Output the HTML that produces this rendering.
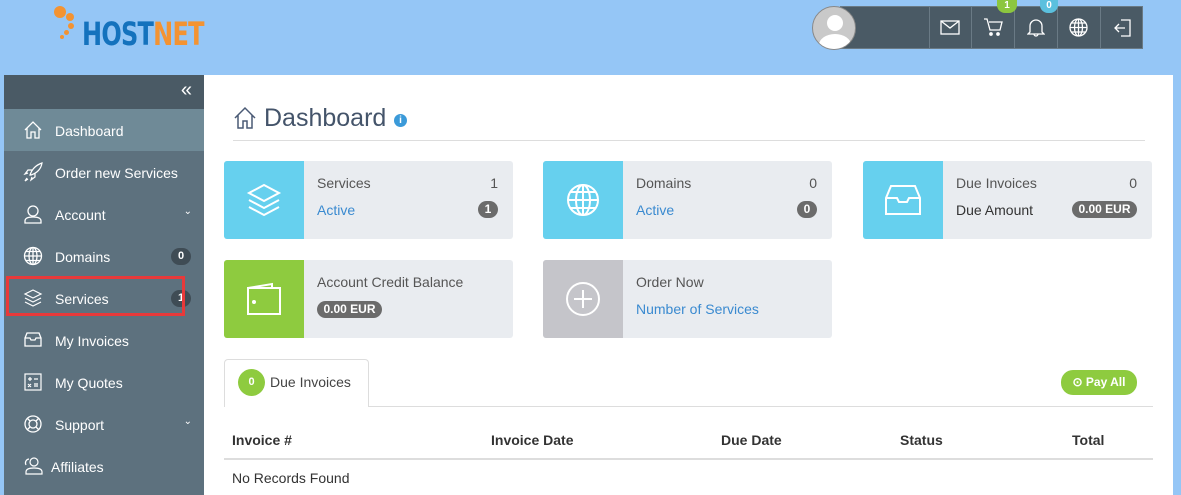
<!DOCTYPE html>
<html><head><style>
*{margin:0;padding:0;box-sizing:border-box}
body{width:1181px;height:495px;overflow:hidden;background:#95c6f6;font-family:"Liberation Sans",sans-serif;position:relative}
.abs{position:absolute}
.side{left:4px;top:75px;width:200px;height:420px;background:#5d717e}
.sidetop{left:0;top:0;width:200px;height:34px;background:#4a5a65;color:#fff;font-size:20px;text-align:right;padding-right:12px;line-height:30px}
.item{position:absolute;left:0;width:200px;height:42px;color:#fff;font-size:14px;line-height:44px;padding-left:51px}
.item svg{position:absolute;left:19px;top:11px}
.main{left:204px;top:75px;width:969px;height:420px;background:#fff}
.card{position:absolute;width:289px;height:78px;background:#e9ecf0;border-radius:3px;overflow:hidden}
.ic{position:absolute;left:0;top:0;width:80px;height:78px;display:flex;align-items:center;justify-content:center}
.t1{position:absolute;left:93px;top:14px;font-size:14px;color:#555}
.t2{position:absolute;left:93px;top:41px;font-size:14px;color:#3a8ad0}
.n1{position:absolute;right:15px;top:14px;font-size:14px;color:#555}
.pill{position:absolute;background:#6b6b6b;color:#fff;font-size:11px;font-weight:bold;border-radius:9px;height:17px;line-height:17px;text-align:center}
.th{position:absolute;top:432px;font-size:14px;font-weight:bold;color:#333}
</style></head><body>
<!-- logo -->
<div class="abs" style="left:54px;top:6px;width:12px;height:12px;border-radius:50%;background:#f39332"></div>
<div class="abs" style="left:66px;top:13px;width:8px;height:8px;border-radius:50%;background:#f39332"></div>
<div class="abs" style="left:68px;top:23px;width:6px;height:6px;border-radius:50%;background:#f39332"></div>
<div class="abs" style="left:64px;top:30px;width:5px;height:5px;border-radius:50%;background:#f39332"></div>
<div class="abs" style="left:60px;top:35px;width:4px;height:4px;border-radius:50%;background:#f39332"></div>
<div class="abs" style="left:82px;top:17px;font-size:32px;font-weight:bold;letter-spacing:-1px;line-height:34px;font-family:'DejaVu Sans',sans-serif;transform:scaleX(0.75);transform-origin:0 0;white-space:nowrap"><span style="color:#1472bd">HOST</span><span style="color:#f39332">NET</span></div>
<!-- top bar -->
<div class="abs" style="left:840px;top:6px;width:303px;height:43px;background:#4a5a65;border:1px solid #6a7a85"></div>
<div class="abs" style="left:812px;top:6px;width:44px;height:44px;border-radius:50%;background:#c9c9c9;border:1px solid #888;overflow:hidden">
<div style="position:absolute;left:14px;top:8px;width:16px;height:16px;border-radius:50%;background:#fff"></div>
<div style="position:absolute;left:6px;top:27px;width:32px;height:22px;border-radius:50%;background:#fff"></div></div>
<div class="abs" style="left:929px;top:6px;width:1px;height:43px;background:#6a7a85"></div>
<div class="abs" style="left:971px;top:6px;width:1px;height:43px;background:#6a7a85"></div>
<div class="abs" style="left:1014px;top:6px;width:1px;height:43px;background:#6a7a85"></div>
<div class="abs" style="left:1057px;top:6px;width:1px;height:43px;background:#6a7a85"></div>
<div class="abs" style="left:1100px;top:6px;width:1px;height:43px;background:#6a7a85"></div>
<svg class="abs" style="left:940px;top:20px" width="20" height="15" fill="none" stroke="#fff" stroke-width="1.3"><rect x="1" y="1" width="18" height="13"/><path d="M1 1l9 7 9-7"/></svg>
<svg class="abs" style="left:983px;top:18px" width="20" height="18" fill="none" stroke="#fff" stroke-width="1.3"><path d="M1 1h3l3 11h10l2-8H6"/><circle cx="8" cy="16" r="1.2" fill="#fff"/><circle cx="15" cy="16" r="1.2" fill="#fff"/></svg>
<svg class="abs" style="left:1027px;top:18px" width="18" height="19" fill="none" stroke="#fff" stroke-width="1.3"><path d="M3 14V8a6 6 0 0112 0v6l2 2H1z M7 16a2 2 0 004 0"/></svg>
<svg class="abs" style="left:1069px;top:18px" width="19" height="19" fill="none" stroke="#fff" stroke-width="1.3"><circle cx="9.5" cy="9.5" r="8.5"/><ellipse cx="9.5" cy="9.5" rx="4" ry="8.5"/><path d="M1 9.5h17M9.5 1v17M2.5 5h14M2.5 14h14"/></svg>
<svg class="abs" style="left:1112px;top:18px" width="20" height="20" fill="none" stroke="#fff" stroke-width="1.3"><path d="M9 2h9v16H9M3 10h10M7 6l-4 4 4 4"/></svg>
<div class="abs" style="left:997px;top:0;width:20px;height:13px;border-radius:0 0 8px 8px;background:#8cc63f;color:#fff;font-size:10px;font-weight:bold;text-align:center;line-height:11px">1</div>
<div class="abs" style="left:1040px;top:0;width:18px;height:13px;border-radius:0 0 8px 8px;background:#5bc0de;color:#fff;font-size:10px;font-weight:bold;text-align:center;line-height:11px">0</div>
<!-- sidebar -->
<div class="abs side">
<div class="abs sidetop">«</div>
<div class="item" style="top:34px;background:#6f8a97;height:42px">
<svg width="20" height="20" fill="none" stroke="#fff" stroke-width="1.3"><path d="M2 10L10 2l8 8M4 8v10h4v-6h4v6h4V8"/></svg>Dashboard</div>
<div class="item" style="top:76px"><svg width="20" height="20" fill="none" stroke="#fff" stroke-width="1.2"><path d="M7 13c2-6 6-10 12-12-1 6-5 10-11 12zM5 11l-3 1 3-4h4M9 15l-1 3 4-3v-4M4 16l-2 3 3-2"/></svg>Order new Services</div>
<div class="item" style="top:118px"><svg width="20" height="20" fill="none" stroke="#fff" stroke-width="1.3"><circle cx="10" cy="7" r="5"/><path d="M2 19v-2c0-3 4-4 8-4s8 1 8 4v2z"/></svg>Account<span style="position:absolute;right:12px;top:-3px;font-size:10px">⌄</span></div>
<div class="item" style="top:160px"><svg width="20" height="20" fill="none" stroke="#fff" stroke-width="1.3"><circle cx="10" cy="10" r="8.5"/><ellipse cx="10" cy="10" rx="4" ry="8.5"/><path d="M1.5 10h17M10 1.5v17M3 5.5h14M3 14.5h14"/></svg>Domains<span class="pill" style="left:167px;top:13px;width:20px;background:#3f4c55">0</span></div>
<div class="item" style="top:202px"><svg width="20" height="20" fill="none" stroke="#fff" stroke-width="1.2"><path d="M10 2l8 4-8 4-8-4zM2 10l8 4 8-4M2 14l8 4 8-4"/></svg>Services<span class="pill" style="left:167px;top:13px;width:20px;background:#3f4c55">1</span></div>
<div class="item" style="top:244px"><svg width="20" height="20" fill="none" stroke="#fff" stroke-width="1.3"><path d="M2 8l2-5h12l2 5v8H2zM2 8h5l1 2h4l1-2h5"/></svg>My Invoices</div>
<div class="item" style="top:286px"><svg width="20" height="20" fill="none" stroke="#fff" stroke-width="1.2"><rect x="2" y="2" width="16" height="16"/><path d="M5 7h4M7 5v4M11 7h4M5 12l3 3M8 12l-3 3M11 12h4M11 14h4"/></svg>My Quotes</div>
<div class="item" style="top:328px"><svg width="20" height="20" fill="none" stroke="#fff" stroke-width="1.3"><circle cx="10" cy="10" r="8"/><circle cx="10" cy="10" r="4"/><path d="M4 4l3 3M16 4l-3 3M4 16l3-3M16 16l-3-3"/></svg>Support<span style="position:absolute;right:12px;top:-3px;font-size:10px">⌄</span></div>
<div class="item" style="top:370px;padding-left:47px"><svg width="22" height="20" fill="none" stroke="#fff" stroke-width="1.2"><circle cx="11" cy="6" r="4"/><path d="M3 18v-2c0-3 4-4 8-4s8 1 8 4v2zM6 3a4 4 0 00-3 6"/></svg>Affiliates</div>
</div>
<div class="abs" style="left:6px;top:276px;width:179px;height:40px;border:3px solid #e8393a"></div>
<!-- main -->
<div class="abs main"></div>
<svg class="abs" style="left:233px;top:106px" width="24" height="24" fill="none" stroke="#4a5a75" stroke-width="1.5"><path d="M2 12L12 2l10 10M5 9v13h5v-7h4v7h5V9"/></svg>
<div class="abs" style="left:264px;top:104px;font-size:25px;color:#44546a">Dashboard</div>
<div class="abs" style="left:394px;top:114px;width:13px;height:13px;border-radius:50%;background:#3b9ad9;color:#fff;font-size:10px;font-weight:bold;text-align:center;line-height:13px">i</div>
<div class="abs" style="left:233px;top:140px;width:912px;height:1px;background:#ddd"></div>

<div class="card" style="left:224px;top:161px"><div class="ic" style="background:#66d0ee">
<svg width="36" height="36" fill="none" stroke="#fff" stroke-width="2"><path d="M18 3l15 8-15 8-15-8zM3 18l15 8 15-8M3 25l15 8 15-8"/></svg></div>
<div class="t1">Services</div><div class="n1">1</div><div class="t2">Active</div><div class="pill" style="right:15px;top:40px;width:20px;font-size:12px">1</div></div>

<div class="card" style="left:543px;top:161px"><div class="ic" style="background:#66d0ee">
<svg width="34" height="34" fill="none" stroke="#fff" stroke-width="2"><circle cx="17" cy="17" r="15"/><ellipse cx="17" cy="17" rx="7" ry="15"/><path d="M2 17h30M17 2v30M5 9h24M5 25h24"/></svg></div>
<div class="t1">Domains</div><div class="n1">0</div><div class="t2">Active</div><div class="pill" style="right:15px;top:40px;width:20px;font-size:12px">0</div></div>

<div class="card" style="left:863px;top:161px"><div class="ic" style="background:#66d0ee">
<svg width="38" height="32" fill="none" stroke="#fff" stroke-width="2"><path d="M2 14l5-12h24l5 12v16H2zM2 14h11l2 4h8l2-4h11"/></svg></div>
<div class="t1">Due Invoices</div><div class="n1">0</div><div class="t1" style="top:41px;color:#333">Due Amount</div><div class="pill" style="right:15px;top:40px;width:65px;font-size:12px">0.00 EUR</div></div>

<div class="card" style="left:224px;top:260px"><div class="ic" style="background:#8ecb3f">
<svg width="36" height="34" fill="none" stroke="#fff" stroke-width="2"><path d="M2 6h32v26H2zM2 6l24-4v4"/><circle cx="8" cy="20" r="1" fill="#fff"/></svg></div>
<div class="t1">Account Credit Balance</div><div class="pill" style="left:93px;top:41px;width:65px;font-size:12px">0.00 EUR</div></div>

<div class="card" style="left:543px;top:260px"><div class="ic" style="background:#c5c5ca">
<svg width="36" height="36" fill="none" stroke="#fff" stroke-width="2"><circle cx="18" cy="18" r="16"/><path d="M18 9v18M9 18h18"/></svg></div>
<div class="t1">Order Now</div><div class="t2">Number of Services</div></div>

<div class="abs" style="left:224px;top:406px;width:929px;height:1px;background:#ddd"></div>
<div class="abs" style="left:224px;top:359px;width:145px;height:48px;border:1px solid #ddd;border-bottom:none;border-radius:4px 4px 0 0;background:#fff"></div>
<div class="abs" style="left:238px;top:369px;width:27px;height:27px;border-radius:50%;background:#8ecb3f;color:#fff;font-size:11px;font-weight:bold;text-align:center;line-height:27px">0</div>
<div class="abs" style="left:270px;top:374px;font-size:14px;color:#444">Due Invoices</div>
<div class="abs" style="left:1061px;top:370px;width:76px;height:25px;border-radius:12px;background:#8ecb3f;color:#fff;font-size:12px;font-weight:bold;line-height:25px;text-align:center">⊙ Pay All</div>
<div class="th" style="left:232px">Invoice #</div>
<div class="th" style="left:491px">Invoice Date</div>
<div class="th" style="left:721px">Due Date</div>
<div class="th" style="left:900px">Status</div>
<div class="th" style="left:1072px">Total</div>
<div class="abs" style="left:224px;top:458px;width:929px;height:2px;background:#ddd"></div>
<div class="abs" style="left:232px;top:470px;font-size:14px;color:#333">No Records Found</div>
</body></html>
